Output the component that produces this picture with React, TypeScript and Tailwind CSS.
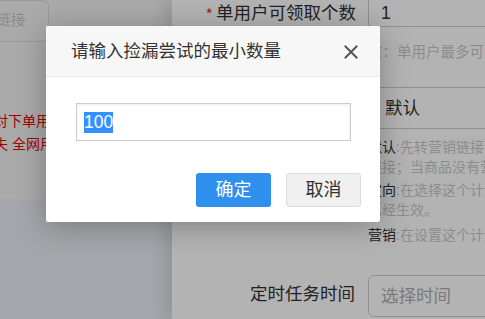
import React from "react";

const FONT = { fontFamily: '"Liberation Sans", "Noto Sans CJK SC", sans-serif' };

export default function App() {
  return (
    <div
      className="relative flex w-[485px] h-[319px] overflow-hidden bg-[#a5a6ab]"
      style={FONT}
    >
      {/* Left panel */}
      <div className="flex w-[172px] shrink-0 flex-col">
        <div className="flex h-[199px] flex-col bg-[#aaaaaa]">
          <div className="-ml-[100px] flex h-[42px] w-[149px] items-center rounded-[6px] border border-[#999999] pl-[52px]">
            <span className="whitespace-nowrap text-[14.5px] text-[#8a8a8a]">请输入链接</span>
          </div>
          <div className="mt-[68px] -ml-[6px] flex flex-col whitespace-nowrap text-[14px] leading-[23px] text-[#a00000]">
            <span>对下单用户领取数量进行限制</span>
            <span>失 全网用户可领取</span>
          </div>
        </div>
        <div className="flex-1 bg-[#a5a6ab]" />
      </div>

      {/* Right drawer panel */}
      <div className="relative flex-1 overflow-hidden bg-[#b3b3b3] shadow-[-8px_0_14px_rgba(0,0,0,0.10)]">
        <div className="flex w-[520px] flex-col">
          {/* Row 1 */}
          <div className="flex h-[27px] items-center">
            <div className="flex w-[196px] shrink-0 items-center justify-end pr-[12px] text-[17.5px] text-[#222222]">
              <span className="mr-[4px] text-[15px] text-[#a00000]">*</span>
              <span className="whitespace-nowrap">单用户可领取个数</span>
            </div>
            <div className="flex h-[27px] flex-1 items-center rounded-bl-[4px] border-b border-l border-[#909090] pl-[12px] text-[17.5px] text-[#222222]">
              1
            </div>
          </div>

          {/* Help */}
          <div className="mt-[15px] flex h-[22px] items-center pl-[196px]">
            <span className="whitespace-nowrap text-[14.5px] text-[#8c8c8c]">注：单用户最多可领取的优惠券个数</span>
          </div>

          {/* Select row */}
          <div className="mt-[23px] flex">
            <div className="w-[196px] shrink-0" />
            <div className="flex h-[42px] flex-1 items-center rounded-[4px] border border-[#909090] pl-[16px] text-[17.5px] text-[#222222]">
              默认
            </div>
          </div>

          {/* Notes */}
          <div className="mt-[8px] flex flex-col pl-[196px] text-[14px] leading-[20px] text-[#8c8c8c]">
            <div className="flex flex-col">
              <span className="whitespace-nowrap">
                <span className="text-[#222222]">默认</span>:先转营销链接，再转商品链接，失败时转为普通
              </span>
              <span className="whitespace-nowrap">链接；当商品没有营销活动时使用普通链接</span>
            </div>
            <div className="mt-[3px] flex flex-col">
              <span className="whitespace-nowrap">
                <span className="text-[#222222]">定向</span>:在选择这个计划后，需要等待审核
              </span>
              <span className="whitespace-nowrap">已经生效。</span>
            </div>
            <div className="mt-[5px] flex flex-col">
              <span className="whitespace-nowrap">
                <span className="text-[#222222]">营销</span>:在设置这个计划后，立即生效
              </span>
            </div>
          </div>

          {/* Time row */}
          <div className="mt-[30px] flex items-center">
            <div className="flex w-[196px] shrink-0 justify-end pb-[4px] pr-[13px] text-[17.5px] text-[#222222]">
              <span className="whitespace-nowrap">定时任务时间</span>
            </div>
            <div className="flex h-[42px] flex-1 items-center rounded-[6px] border border-[#909090] pl-[12px] text-[17.5px] text-[#7a7a7a]">
              选择时间
            </div>
          </div>
        </div>
      </div>

      {/* Dialog */}
      <div className="absolute left-[46px] top-[26px] flex h-[196px] w-[334px] flex-col overflow-hidden rounded-[2px] bg-white shadow-[0_4px_30px_rgba(0,0,0,0.28)]">
        <div className="flex h-[51px] shrink-0 items-center justify-between border-b border-[#e8e8e8] bg-[#f7f7f7] pl-[25px] pr-[22px]">
          <span className="whitespace-nowrap text-[17.5px] text-[#333333]">请输入捡漏尝试的最小数量</span>
          <svg width="14" height="14" viewBox="0 0 14 14" className="mt-[1px]">
            <path d="M1.5 1.5 L12.5 12.5 M12.5 1.5 L1.5 12.5" stroke="#555555" strokeWidth="2" strokeLinecap="square" fill="none" />
          </svg>
        </div>
        <div className="flex flex-col px-[30px] pt-[26px]">
          <div className="flex h-[38px] w-[275px] items-center border border-[#cccccc] pl-[7px] shadow-[inset_0_1px_3px_rgba(0,0,0,0.08)]">
            <span className="bg-[#3390ff] text-[17.5px] leading-[21px] text-white">100</span>
          </div>
        </div>
        <div className="mt-[32px] flex justify-end gap-[15px] pr-[19px]">
          <button className="flex h-[34px] w-[75px] items-center justify-center rounded-[3px] bg-[#2f8fed] text-[18px] text-white">
            确定
          </button>
          <button className="flex h-[34px] w-[75px] items-center justify-center rounded-[3px] border border-[#dcdcdc] bg-[#f0f0f0] text-[18px] text-[#333333]">
            取消
          </button>
        </div>
      </div>
    </div>
  );
}
